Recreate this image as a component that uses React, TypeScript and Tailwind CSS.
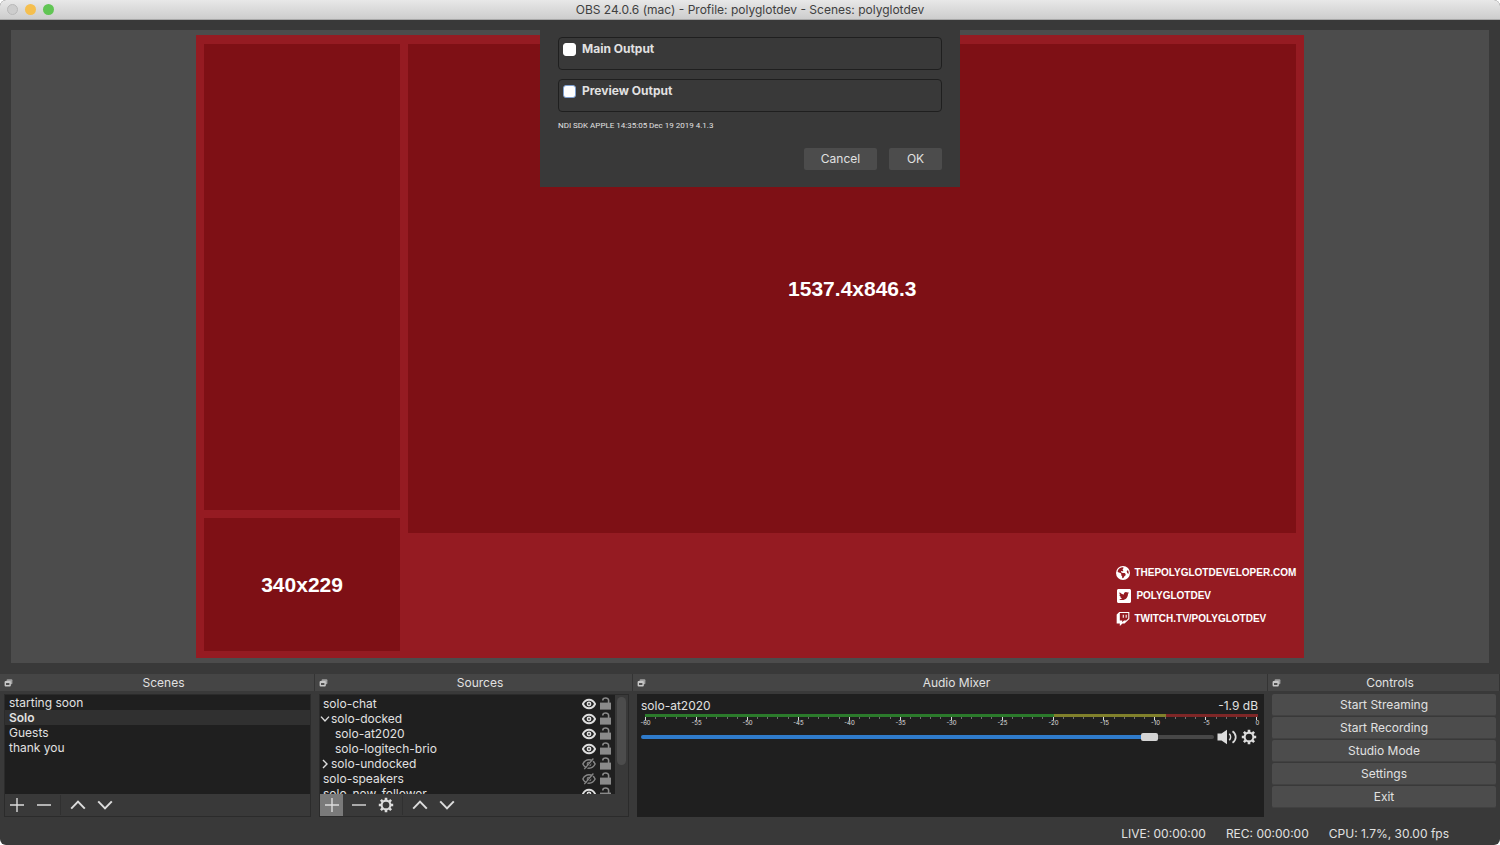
import type { ReactNode } from "react";
import { FaTwitterSquare, FaTwitch } from "react-icons/fa";
import { FaEarthAmericas } from "react-icons/fa6";

type Source = {
  name: string;
  visible: boolean;
  indent?: boolean;
  group?: "open" | "closed";
};

const scenes = ["starting soon", "Solo", "Guests", "thank you"];

const sources: Source[] = [
  { name: "solo-chat", visible: true },
  { name: "solo-docked", visible: true, group: "open" },
  { name: "solo-at2020", visible: true, indent: true },
  { name: "solo-logitech-brio", visible: true, indent: true },
  { name: "solo-undocked", visible: false, group: "closed" },
  { name: "solo-speakers", visible: false },
  { name: "solo_new_follower", visible: true },
];

const controls = ["Start Streaming", "Start Recording", "Studio Mode", "Settings", "Exit"];

const decibels = [-60, -55, -50, -45, -40, -35, -30, -25, -20, -15, -10, -5, 0];

function PopoutIcon() {
  return (
    <svg viewBox="0 0 9 8" className="h-2 w-[9px]" aria-hidden="true">
      <rect x="2.6" y="0.2" width="5.8" height="5" rx="1" fill="#a0a0a0" />
      <rect x="0.6" y="2" width="6.2" height="5.4" rx="1" fill="#c8c8c8" />
      <rect x="2" y="4" width="3.4" height="2" fill="#505050" />
    </svg>
  );
}

function PlusIcon() {
  return (
    <svg viewBox="0 0 14 14" className="size-3.5" fill="none" stroke="#dcdcdc" strokeWidth="1.4" aria-hidden="true">
      <path d="M7 0v14M0 7h14" />
    </svg>
  );
}

function MinusIcon() {
  return (
    <svg viewBox="0 0 14 14" className="size-3.5" fill="none" stroke="#dcdcdc" strokeWidth="1.4" aria-hidden="true">
      <path d="M0 7h14" />
    </svg>
  );
}

function UpIcon() {
  return (
    <svg viewBox="0 0 16 14" className="h-3.5 w-4" fill="none" stroke="#dcdcdc" strokeWidth="2" aria-hidden="true">
      <path d="M1.2 10.6 8 3.6l6.8 7" />
    </svg>
  );
}

function DownIcon() {
  return (
    <svg viewBox="0 0 16 14" className="h-3.5 w-4" fill="none" stroke="#dcdcdc" strokeWidth="2" aria-hidden="true">
      <path d="M1.2 3.4 8 10.4l6.8-7" />
    </svg>
  );
}

function GearIcon() {
  return (
    <svg viewBox="0 0 16 16" className="size-4" aria-hidden="true">
      <circle cx="8" cy="8" r="4.4" fill="none" stroke="#dcdcdc" strokeWidth="2.1" />
      <g stroke="#dcdcdc" strokeWidth="2.6">
        <path d="M8 0.8v2.4M8 12.8v2.4M0.8 8h2.4M12.8 8h2.4" />
        <path d="M2.9 2.9l1.7 1.7M11.4 11.4l1.7 1.7M2.9 13.1l1.7-1.7M11.4 4.6l1.7-1.7" />
      </g>
    </svg>
  );
}

function EyeIcon({ open }: { open: boolean }) {
  const color = open ? "#dedede" : "#868686";
  return (
    <svg viewBox="0 0 14 12" className="h-3 w-3.5" fill="none" aria-hidden="true">
      <path d="M0.9 6C3.6 0.4 10.4 0.4 13.1 6 10.4 11.6 3.6 11.6 0.9 6Z" stroke={color} strokeWidth={open ? "1.9" : "1.5"} />
      {open ? (
        <>
          <circle cx="7" cy="6" r="2.4" fill={color} />
          <circle cx="7" cy="6" r="0.9" fill="#3a3a3a" />
        </>
      ) : (
        <>
          <circle cx="7" cy="6" r="1.8" stroke={color} strokeWidth="1.1" />
          <path d="M3.4 11.6 12 0.9" stroke="#1f1f1f" strokeWidth="1.2" />
          <path d="M2.3 11.2 11.4 0.5" stroke={color} strokeWidth="1.3" />
        </>
      )}
    </svg>
  );
}

function UnlockIcon() {
  return (
    <svg viewBox="0 0 11 13" className="h-[13px] w-[11px]" aria-hidden="true">
      <rect x="0" y="5.6" width="11" height="7" fill="#8a8a8a" />
      <path d="M2.8 3.6V3.2C2.8 0.3 8.6 0.3 8.6 3.2V6.2" fill="none" stroke="#8a8a8a" strokeWidth="1.6" />
    </svg>
  );
}

function SpeakerIcon() {
  return (
    <svg viewBox="0 0 20 16" className="h-4 w-5" fill="none" stroke="#dcdcdc" aria-hidden="true">
      <path d="M0.5 4.5H4.5L10 0.8V15.2L4.5 11.5H0.5Z" fill="#dcdcdc" stroke="none" />
      <path d="M12.3 4.8C14 6.6 14 9.4 12.3 11.2" strokeWidth="1.6" />
      <path d="M15.5 2.2C19.8 5.2 19.8 10.8 15.5 13.8" strokeWidth="1.7" />
    </svg>
  );
}

function ToolButton({ label, active, children }: { label: string; active?: boolean; children: ReactNode }) {
  return (
    <button
      type="button"
      aria-label={label}
      className={`flex h-[22px] w-[23px] items-center justify-center ${active ? "bg-[#7a7a7a]" : ""}`}
    >
      {children}
    </button>
  );
}

function Dock({ title, children }: { title: string; children: ReactNode }) {
  return (
    <section className="flex min-w-0 flex-col">
      <header className="flex h-[17px] items-center border-r border-[#343434] bg-[#454545] pl-1">
        <PopoutIcon />
        <h2 className="flex-1 text-center text-[12px] leading-4">{title}</h2>
      </header>
      <div className="flex h-[126px] flex-col px-1 pt-[3px]">{children}</div>
    </section>
  );
}

function OutputGroup({ label, focused }: { label: string; focused?: boolean }) {
  return (
    <div className="h-[33px] rounded border border-[#1f1f1f] px-1 pt-1">
      <label className="flex items-center gap-1.5 text-[12px] leading-[14px] font-bold">
        <input
          type="checkbox"
          className={`size-[13px] appearance-none rounded-[3px] border bg-white ${focused ? "border-[#7d9fd0]" : "border-white"}`}
        />
        {label}
      </label>
    </div>
  );
}

function OutputDialog() {
  return (
    <form
      role="dialog"
      aria-label="Output settings"
      className="absolute top-0 left-1/2 w-[420px] -translate-x-1/2 bg-[#393939] px-[18px] pt-[17px] pb-[17px]"
    >
      <div className="flex flex-col gap-[9px]">
        <OutputGroup label="Main Output" />
        <OutputGroup label="Preview Output" focused />
      </div>
      <p className="mt-2 font-[Roboto,sans-serif] text-[8px] leading-3">NDI SDK APPLE 14:35:05 Dec 19 2019 4.1.3</p>
      <div className="mt-4 flex justify-end gap-3 text-[12px]">
        <button type="button" className="h-[22px] w-[73px] rounded-xs bg-[#4c4c4c]">
          Cancel
        </button>
        <button type="button" className="h-[22px] w-[53px] rounded-xs bg-[#4c4c4c]">
          OK
        </button>
      </div>
    </form>
  );
}

function Preview() {
  return (
    <main className="flex flex-1 justify-center bg-[#4c4c4c] py-[5px]">
      <div className="flex w-3/4 gap-2 bg-[#951b22] px-2 pt-[9px] pb-[7px] font-['Liberation_Sans',sans-serif] font-bold text-white">
        <div className="flex w-[18%] flex-col gap-2">
          <div className="flex-1 bg-[#7e1015]" />
          <div className="flex h-[133px] items-center justify-center bg-[#7e1015] text-[21px]">340x229</div>
        </div>
        <div className="flex flex-1 flex-col">
          <div className="flex flex-1 items-center justify-center bg-[#7e1015] text-[21px]">1537.4x846.3</div>
          <ul className="flex h-[118px] flex-col gap-[7px] self-end pt-8 text-[10px] leading-4">
            <li className="flex items-center gap-1">
              <FaEarthAmericas className="size-3.5" />
              THEPOLYGLOTDEVELOPER.COM
            </li>
            <li className="flex items-center gap-1">
              <FaTwitterSquare className="size-4" />
              POLYGLOTDEV
            </li>
            <li className="flex items-center gap-1">
              <FaTwitch className="size-3.5" />
              TWITCH.TV/POLYGLOTDEV
            </li>
          </ul>
        </div>
      </div>
    </main>
  );
}

function ScenesDock() {
  return (
    <Dock title="Scenes">
      <div className="flex flex-1 flex-col border border-[#2b2b2b]">
        <ul className="flex-1 bg-[#1f1f1f] text-[12px] leading-[15px]">
          {scenes.map((scene) => (
            <li key={scene} className={scene === "Solo" ? "bg-[#303030] px-1 font-semibold" : "px-1"}>
              {scene}
            </li>
          ))}
        </ul>
        <div className="flex h-[22px] items-center gap-1">
          <ToolButton label="Add scene"><PlusIcon /></ToolButton>
          <ToolButton label="Remove scene"><MinusIcon /></ToolButton>
          <span className="mx-px h-5 w-px bg-[#303030]" />
          <ToolButton label="Move scene up"><UpIcon /></ToolButton>
          <ToolButton label="Move scene down"><DownIcon /></ToolButton>
        </div>
      </div>
    </Dock>
  );
}

function SourceRow({ source }: { source: Source }) {
  return (
    <li className="flex h-[15px] shrink-0 items-center pr-1">
      {source.group && (
        <svg viewBox="0 0 10 10" className="size-2.5" fill="none" stroke="#dcdcdc" strokeWidth="1.4" aria-hidden="true">
          <path d={source.group === "open" ? "M1 2.6 5 7 9 2.6" : "M3 0.9 7 5 3 9.1"} />
        </svg>
      )}
      <span className={`flex-1 ${source.group ? "pl-px" : source.indent ? "pl-[15px]" : "pl-[3px]"}`}>{source.name}</span>
      <button type="button" aria-label={`${source.visible ? "Hide" : "Show"} ${source.name}`} className="mr-1">
        <EyeIcon open={source.visible} />
      </button>
      <button type="button" aria-label={`Lock ${source.name}`}>
        <UnlockIcon />
      </button>
    </li>
  );
}

function SourcesDock() {
  return (
    <Dock title="Sources">
      <div className="flex flex-1 flex-col border border-[#2b2b2b]">
        <div className="flex h-[99px]">
          <ul className="flex flex-1 flex-col overflow-hidden bg-[#1f1f1f] pt-px text-[12px] leading-[15px]">
            {sources.map((source) => (
              <SourceRow key={source.name} source={source} />
            ))}
          </ul>
          <div className="w-[13px] px-0.5 pt-0.5">
            <div className="h-[68px] rounded-full bg-[#4c4c4c]" />
          </div>
        </div>
        <div className="flex h-[22px] items-center gap-1">
          <ToolButton label="Add source" active><PlusIcon /></ToolButton>
          <ToolButton label="Remove source"><MinusIcon /></ToolButton>
          <ToolButton label="Source properties"><GearIcon /></ToolButton>
          <span className="mx-px h-5 w-px bg-[#303030]" />
          <ToolButton label="Move source up"><UpIcon /></ToolButton>
          <ToolButton label="Move source down"><DownIcon /></ToolButton>
        </div>
      </div>
    </Dock>
  );
}

function VolumeMeter() {
  return (
    <div className="ml-1">
      <div className="flex h-[3px]">
        <div className="flex-[400] bg-[#2b7a2b]" />
        <div className="flex-[110] bg-[#80802b]" />
        <div className="flex-[90] bg-[#7e2727]" />
      </div>
      <div className="flex h-[3px] items-start justify-between">
        {Array.from({ length: 61 }, (_, i) => (
          <span key={i} className={`w-px ${i % 5 === 0 ? "h-[3px] bg-[#dcdcdc]" : "h-0.5 bg-[#707070]"}`} />
        ))}
      </div>
      <div className="flex h-1.5 justify-between text-[6px] leading-[6px]">
        {decibels.map((db) => (
          <span key={db} className="flex w-px justify-center">
            {db}
          </span>
        ))}
      </div>
    </div>
  );
}

function MixerDock() {
  return (
    <Dock title="Audio Mixer">
      <div className="flex-1 bg-[#1f1f1f] pt-1 pr-1.5 pl-1 text-[12px]">
        <div className="flex justify-between leading-4">
          <label htmlFor="volume">solo-at2020</label>
          <span>-1.9 dB</span>
        </div>
        <VolumeMeter />
        <div className="mt-[3px] flex items-center">
          <input
            id="volume"
            type="range"
            defaultValue={90}
            className="h-1 min-w-0 flex-1 appearance-none rounded-full bg-[linear-gradient(to_right,#2f7bcb_90%,#474747_90%)] [&::-webkit-slider-thumb]:h-2 [&::-webkit-slider-thumb]:w-[17px] [&::-webkit-slider-thumb]:appearance-none [&::-webkit-slider-thumb]:rounded-xs [&::-webkit-slider-thumb]:bg-[#d4d4d4]"
          />
          <button type="button" aria-label="Mute solo-at2020" className="ml-[3px]">
            <SpeakerIcon />
          </button>
          <button type="button" aria-label="solo-at2020 settings" className="ml-1 mr-px">
            <GearIcon />
          </button>
        </div>
      </div>
    </Dock>
  );
}

function ControlsDock() {
  return (
    <Dock title="Controls">
      <div className="flex flex-col gap-px">
        {controls.map((label) => (
          <button key={label} type="button" className="h-[22px] rounded-xs border-b border-[#414141] bg-[#4c4c4c] pt-px text-[12px] leading-4">
            {label}
          </button>
        ))}
      </div>
    </Dock>
  );
}

export default function App() {
  return (
    <div className="min-h-screen bg-white">
      <div className="flex min-h-screen flex-col overflow-hidden rounded-md bg-[#393939] font-[Inter,sans-serif] text-[#e1e1e1]">
        <header className="flex h-5 items-center border-b border-[#a8a8a8] bg-linear-to-b from-[#e8e8e8] to-[#cdcdcd] pl-[7px] text-[#404040]">
          <div className="flex w-12 gap-[7px]">
            <button type="button" aria-label="Close" className="size-[11px] rounded-full border border-[#b8b8b8] bg-[#cdcdcd]" />
            <button type="button" aria-label="Minimize" className="size-[11px] rounded-full bg-[#f5bf4f]" />
            <button type="button" aria-label="Zoom" className="size-[11px] rounded-full bg-[#61c554]" />
          </div>
          <h1 className="flex-1 pr-[55px] text-center text-[12px] leading-4">
            OBS 24.0.6 (mac) - Profile: polyglotdev - Scenes: polyglotdev
          </h1>
        </header>
        <div className="relative flex flex-1 flex-col px-[11px] pt-2.5">
          <Preview />
          <OutputDialog />
        </div>
        <div className="mt-[11px] grid grid-cols-[315fr_318fr_635fr_232fr]">
          <ScenesDock />
          <SourcesDock />
          <MixerDock />
          <ControlsDock />
        </div>
        <footer className="flex h-7 items-center justify-end gap-5 pt-1.5 pr-[51px] text-[12px] leading-4">
          <span>LIVE: 00:00:00</span>
          <span>REC: 00:00:00</span>
          <span>CPU: 1.7%, 30.00 fps</span>
        </footer>
      </div>
    </div>
  );
}
